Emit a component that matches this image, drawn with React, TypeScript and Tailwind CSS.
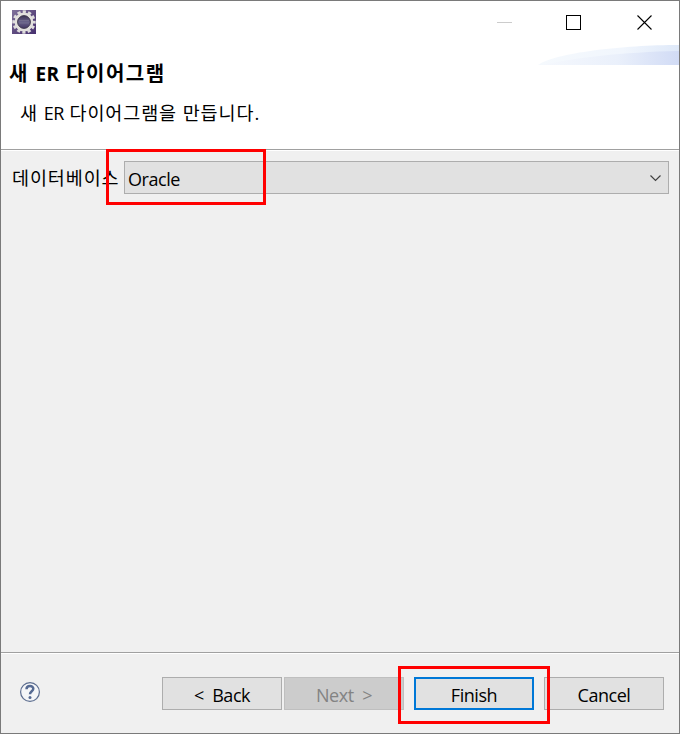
import React from "react";

const KR = "font-['Open_Sans','Noto_Sans_CJK_KR',sans-serif]";

function GearIcon() {
  return (
    <svg width="24" height="24" viewBox="0 0 24 24">
      <defs>
        <linearGradient id="tile" x1="0" y1="0" x2="1" y2="1">
          <stop offset="0" stopColor="#80729b" />
          <stop offset="0.5" stopColor="#5f4c80" />
          <stop offset="1" stopColor="#47306f" />
        </linearGradient>
        <linearGradient id="core" x1="0" y1="0" x2="0" y2="1">
          <stop offset="0" stopColor="#2d2544" />
          <stop offset="0.5" stopColor="#6b648c" />
          <stop offset="1" stopColor="#392a58" />
        </linearGradient>
      </defs>
      <rect width="24" height="24" fill="url(#tile)" />
      <circle cx="12" cy="12" r="10.2" fill="none" stroke="#dddbdc" strokeWidth="3" strokeDasharray="3.2 2.141" strokeDashoffset="1.6" />
      <circle cx="12" cy="12" r="8" fill="url(#core)" stroke="#e2e0dd" strokeWidth="3" />
      <circle cx="12" cy="12" r="6.4" fill="none" stroke="#3a3348" strokeWidth="0.9" />
      <path d="M7 10.5h10M7 13h10" stroke="#77718f" strokeWidth="0.8" />
    </svg>
  );
}

function Swoosh() {
  return (
    <svg className="block" width="141" height="20" viewBox="0 0 141 20">
      <defs>
        <linearGradient id="outer" x1="0" x2="1">
          <stop offset="0" stopColor="#f5f9fd" />
          <stop offset="0.6" stopColor="#f1f6fd" />
          <stop offset="1" stopColor="#dfe9f9" />
        </linearGradient>
        <linearGradient id="inner" x1="0" x2="1">
          <stop offset="0" stopColor="#f5f8fd" />
          <stop offset="0.55" stopColor="#eaf0fb" />
          <stop offset="1" stopColor="#d1dbf5" />
        </linearGradient>
      </defs>
      <path d="M0 20C16 8 85 0 141 0V20Z" fill="url(#outer)" />
      <path d="M4 20C35 13 85 7 141 6V20Z" fill="url(#inner)" />
    </svg>
  );
}

function Button({ className, children }: { className: string; children: React.ReactNode }) {
  return (
    <button className={`flex h-[33px] w-[120px] items-center justify-center whitespace-pre pt-[2px] text-[18px] leading-[24px] tracking-[-0.45px] ${className}`}>
      {children}
    </button>
  );
}

export default function App() {
  return (
    <div className={`relative flex h-[734px] w-[680px] flex-col overflow-hidden border border-[#7a7a7a] bg-[#f0f0f0] text-black ${KR}`}>
      <header className="flex h-[148px] shrink-0 flex-col bg-white">
        <div className="flex h-[44px] shrink-0 items-start justify-between pl-[11px] pt-[9px]">
          <GearIcon />
          <div className="flex pr-[26px] pt-[4px]">
            <svg width="157" height="17" viewBox="0 0 157 17" shapeRendering="crispEdges" fill="none">
              <path d="M1 8.5h15" stroke="#cccccc" />
              <rect x="70.5" y="1.5" width="14" height="14" stroke="#000" />
              <path d="M141.5 1.5l14 14M155.5 1.5l-14 14" stroke="#000" shapeRendering="auto" strokeWidth="1.1" />
            </svg>
          </div>
        </div>
        <div className="flex h-[104px] justify-between">
          <div className="pl-[8px] pt-[15px]">
            <h1 className="h-[28px] whitespace-nowrap text-[20px] font-bold leading-[28px] tracking-[1.5px]">
              새 <span className="text-[19px] tracking-[0.3px]">ER</span> 다이어그램
            </h1>
            <p className="mt-[11px] h-[28px] whitespace-nowrap pl-[11px] text-[18.5px] leading-[28px] tracking-[0.9px]">
              새 <span className="text-[18px] tracking-[-0.5px]">ER</span> 다이어그램을 만듭니다.
            </p>
          </div>
          <Swoosh />
        </div>
      </header>
      <main className="h-[503px] shrink-0 border-t border-[#a0a0a0]">
        <div className="flex h-[44px] items-start border-t border-white pl-[11px] pt-[10px]">
          <label className="w-[112px] shrink-0 whitespace-nowrap text-[18.5px] leading-[33px] tracking-[0.9px]">데이터베이스</label>
          <div className="flex h-[33px] w-[545px] items-center justify-between border border-[#adadad] bg-[#e1e1e1] pl-[3px] pr-[6px]">
            <span className="pt-[2px] text-[18px] leading-[24px] tracking-[-0.45px]">Oracle</span>
            <svg width="13" height="8" viewBox="0 0 13 8" fill="none">
              <path d="M1.5 1.5l5 5 5-5" stroke="#404040" strokeWidth="1.2" />
            </svg>
          </div>
        </div>
      </main>
      <footer className="h-[81px] shrink-0 border-t border-[#a0a0a0]">
        <div className="flex border-t border-white pl-[18px] pt-[23px]">
          <svg className="mt-[4px] mr-[121px]" width="22" height="22" viewBox="0 0 22 22" fill="none">
            <circle cx="11" cy="11" r="9.4" fill="#f5f6f8" stroke="#5c6d8f" strokeWidth="1.2" />
            <path d="M7.5 8.2C7.5 3.8 14.5 4 14.3 7.8C14.2 10.2 11 10.3 11 13.2" stroke="#566a92" strokeWidth="2.5" />
            <circle cx="11" cy="16.4" r="1.5" fill="#566a92" />
          </svg>
          <Button className="mr-[2px] border border-[#adadad] bg-[#e1e1e1]">{"<  Back"}</Button>
          <Button className="mr-[10px] border border-[#bfbfbf] bg-[#cccccc] text-[#838383]">{"Next  >"}</Button>
          <Button className="mr-[10px] border-2 border-[#0078d7] bg-[#e1e1e1]">Finish</Button>
          <Button className="border border-[#adadad] bg-[#e1e1e1]">Cancel</Button>
        </div>
      </footer>
      <div className="absolute left-[105px] top-[148px] h-[56px] w-[160px] border-3 border-[#ff0000]" />
      <div className="absolute left-[397px] top-[665px] h-[58px] w-[152px] border-3 border-[#ff0000]" />
    </div>
  );
}
